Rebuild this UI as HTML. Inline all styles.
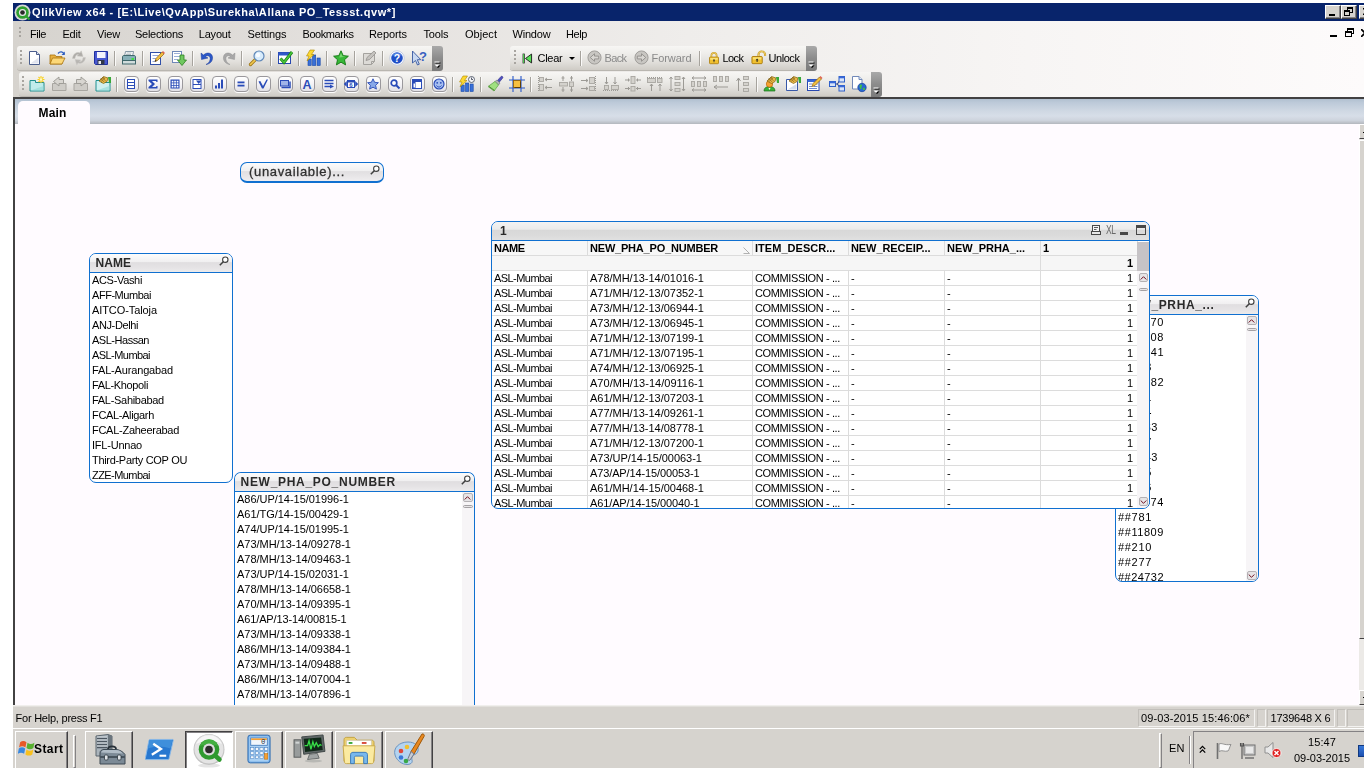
<!DOCTYPE html>
<html lang="en"><head><meta charset="utf-8"><title>QlikView x64 - Allana PO_Tessst.qvw</title>
<style>
*{box-sizing:border-box}
html,body{margin:0;padding:0}
body{width:1364px;height:768px;overflow:hidden;position:relative;background:#fff;
 font-family:"Liberation Sans","DejaVu Sans",sans-serif;font-size:11px;color:#000;line-height:1}
.a{position:absolute}
.t,.r,.c,.g,#title .cap,.hd span,#tab span,.tbx .cap span{filter:grayscale(1)}
.t{position:absolute;white-space:nowrap;letter-spacing:-0.4px;font-size:11px;line-height:13px}
#title{left:13px;top:3px;width:1351px;height:18px;background:#08246b}
#title .cap{left:19px;top:2px;color:#fff;font-weight:bold;font-size:11px;letter-spacing:-0.15px;line-height:14px;white-space:nowrap}
#bars{left:13px;top:21px;width:1351px;height:76px;background:linear-gradient(90deg,#d6d3ce 0,#e4e1de 25%,#efedeb 50%,#f7f5f4 75%,#fdfbfb 100%)}
.band{position:absolute;border-radius:3px 0 0 3px;background:linear-gradient(180deg,#f7f6f4 0,#efeeeb 30%,#e2e0dc 65%,#cfccc6 100%);box-shadow:0 1px 0 #b9b6b0}
.grip{position:absolute;width:2px;height:15px;background:repeating-linear-gradient(180deg,#a8a5a0 0 2px,transparent 2px 4px)}
.grip:after{content:"";position:absolute;left:1px;top:1px;width:2px;height:100%;background:repeating-linear-gradient(180deg,#fff 0 2px,transparent 2px 4px);z-index:-1}
.sep{position:absolute;width:2px;height:15px;border-left:1px solid #a6a39d;border-right:1px solid #fbfaf9}
.ovf{position:absolute;width:11px;background:linear-gradient(180deg,#a9a9a9 0,#8b8b8b 50%,#7b7b7b 100%);border-radius:0 3px 3px 0}
.ic{position:absolute;width:16px;height:16px;overflow:visible}
.rb{position:absolute;width:15px;height:16px;border:1px solid #9a989c;border-radius:4px;background:linear-gradient(180deg,#fff 0,#f4f3f6 50%,#e2e1e6 100%);box-shadow:0 1px 0 #fff}
#tabrow{left:13px;top:97px;width:1351px;height:27px;border-top:2px solid #424142;border-left:2px solid #424142;
 background:linear-gradient(180deg,#b1c0d0 0,#bdcad9 15%,#cfd8e3 48%,#d7dee8 68%,#cdd3dc 86%,#b3b7bd 100%)}
#tab{left:18px;top:101px;width:72px;height:24px;background:#fffbff;border-radius:5px 5px 0 0}
#tab span{left:20.500px;top:5px;font-weight:bold;font-size:12px;line-height:14px;letter-spacing:0.15px}
#sheet{left:13px;top:124px;width:1346px;height:581px;background:#fffbff;border-left:2px solid #424142;overflow:hidden}
#status{left:13px;top:705px;width:1351px;height:24px;background:#d6d3ce;border-top:1px solid #f1efed;box-shadow:inset 0 1px 0 #e2e0dc}
.pane{position:absolute;top:3px;height:18px;border:1px solid;border-color:#c2bfba #f3f2f0 #f3f2f0 #c2bfba}
#task{left:13px;top:728px;width:1351px;height:40px;background:#d6d3ce;border-top:1px solid #fff}
.tb{position:absolute;top:2px;width:48px;height:40px;border:1px solid;border-color:#fff #424142 #424142 #fff;box-shadow:inset -1px -1px 0 #848284,inset 1px 1px 0 #d6d3ce}
.tb.dn{border-color:#424142 #fff #fff #424142;box-shadow:inset 1px 1px 0 #848284;background:#fff}

.lb{position:absolute;border:1px solid #1070d0;border-radius:7px 7px 7px 7px;background:#fff;overflow:hidden}
.lb .hd{position:absolute;left:0;top:0;right:0;height:19px;border-bottom:1px solid #1070d0;
 background:linear-gradient(180deg,#fcfcfc 0,#f1f0f1 42%,#e0dee0 48%,#e5e3e5 75%,#ecebec 100%)}
.lb .hd span{position:absolute;left:5.500px;top:2px;font-size:12px;line-height:14px;white-space:nowrap;color:#2a2a2a;font-weight:bold}
.lb .r{position:absolute;left:2px;height:15px;line-height:15px;font-size:11px;white-space:nowrap;letter-spacing:-0.12px}
.mag{position:absolute;width:10px;height:10px}
.sb{position:absolute;width:12px;background:#f7f5f7}
.sbtn{position:absolute;left:1.500px;width:9px;height:9px;border:1px solid #b4b1b4;border-radius:2px;background:#e6e4e6}
.sth{position:absolute;left:1.500px;width:9px;height:3px;border:1px solid #a5a2a5;border-radius:2px;background:#e7e5e7}
.lb .sbtn,.lb .sth{left:.5px;width:10px}
.tbx{position:absolute;border:1px solid #1070d0;border-radius:7px;background:#fff;overflow:hidden}
.tbx .cap{position:absolute;left:0;top:0;right:0;height:19px;background:linear-gradient(180deg,#f3f3f3 0,#ebebeb 40%,#d8d8d8 46%,#dbdbdb 75%,#e1e1e1 100%);border-bottom:1px solid #1070d0}
.tbx .c{position:absolute;height:15px;line-height:15px;font-size:11px;white-space:nowrap;overflow:hidden;letter-spacing:-0.12px;border-right:1px solid #dedbde;border-bottom:1px solid #dedbde;padding-left:2px}
.tbx .h{font-weight:bold;background:#f7f7f7}
.tbx .tt{background:#f7f5f7}

.tray{position:absolute;left:1180px;top:2px;width:180px;height:40px;border-left:1px solid #848284;border-top:1px solid #848284}
</style></head>
<body>
<div id="title" class="a">
<svg class="a" style="left:1px;top:1px" width="17" height="17" viewBox="0 0 17 17"><circle cx="8.500" cy="8.500" r="8" fill="#d8d8d8"></circle><circle cx="8.500" cy="8.500" r="6.300" fill="#30a030"></circle><path d="M11 11l4.500 4.500" stroke="#30a030" stroke-width="2.400"></path><circle cx="8.500" cy="8.500" r="3.600" fill="#e8e8e8"></circle><circle cx="8.500" cy="8.500" r="2.300" fill="#282828"></circle></svg>
<div class="a cap" style="letter-spacing: 0.57px;">QlikView x64 - [E:\Live\QvApp\Surekha\Allana PO_Tessst.qvw*]</div>
<div class="a" style="left:1312px;top:2px;width:16px;height:14px;background:#d6d3ce;border:1px solid;border-color:#fff #424142 #424142 #fff;box-shadow:inset -1px -1px 0 #848284"><i class="a" style="left:3px;top:8px;width:6px;height:2px;background:#000"></i></div>
<div class="a" style="left:1328px;top:2px;width:16px;height:14px;background:#d6d3ce;border:1px solid;border-color:#fff #424142 #424142 #fff;box-shadow:inset -1px -1px 0 #848284"><i class="a" style="left:5px;top:1px;width:6px;height:6px;border:1px solid #000;border-top-width:2px"></i><i class="a" style="left:2px;top:4px;width:6px;height:6px;border:1px solid #000;border-top-width:2px;background:#d6d3ce"></i></div>
<div class="a" style="left:1346px;top:2px;width:16px;height:14px;background:#d6d3ce;border:1px solid;border-color:#fff #424142 #424142 #fff;box-shadow:inset -1px -1px 0 #848284"><svg class="a" style="left:3px;top:2px" width="8" height="7"><path d="M0 0l8 7M8 0L0 7" stroke="#000" stroke-width="1.600"></path></svg></div>
</div>
<div id="bars" class="a"></div>
<div class="grip" style="left:19px;top:27px;height:11px"></div>
<div class="t mn" style="left: 30px; top: 28px; letter-spacing: -0.43px;">File</div>
<div class="t mn" style="left: 62.5px; top: 28px; letter-spacing: -0.24px;">Edit</div>
<div class="t mn" style="left: 97px; top: 28px; letter-spacing: -0.16px;">View</div>
<div class="t mn" style="left: 135px; top: 28px; letter-spacing: -0.28px;">Selections</div>
<div class="t mn" style="left: 198.7px; top: 28px; letter-spacing: -0.17px;">Layout</div>
<div class="t mn" style="left: 247.5px; top: 28px; letter-spacing: -0.09px;">Settings</div>
<div class="t mn" style="left: 302.5px; top: 28px; letter-spacing: -0.45px;">Bookmarks</div>
<div class="t mn" style="left: 369px; top: 28px; letter-spacing: -0.08px;">Reports</div>
<div class="t mn" style="left: 423.5px; top: 28px; letter-spacing: -0.14px;">Tools</div>
<div class="t mn" style="left: 465px; top: 28px; letter-spacing: 0.03px;">Object</div>
<div class="t mn" style="left: 512.5px; top: 28px; letter-spacing: -0.19px;">Window</div>
<div class="t mn" style="left: 566px; top: 28px; letter-spacing: -0.41px;">Help</div>
<i class="a" style="left:1330px;top:35px;width:7px;height:2px;background:#000"></i>
<i class="a" style="left:1347px;top:28px;width:7px;height:6px;border:1px solid #000;border-top-width:2px"></i><i class="a" style="left:1345px;top:31px;width:7px;height:6px;border:1px solid #000;border-top-width:2px;background:#fbf9f9"></i>
<svg class="a" style="left:1361px;top:29px" width="8" height="8"><path d="M0 0l8 8M8 0L0 8" stroke="#000" stroke-width="1.700"></path></svg>
<div class="band" style="left:17px;top:46px;width:415px;height:24px"></div>
<div class="grip" style="left:20px;top:50px"></div>
<div class="ovf" style="left:432px;top:46px;height:25px"><svg class="a" style="left:2px;top:15px" width="8" height="8" viewBox="0 0 8 8"><path d="M1.500 1.500h5v1h-5zM1.500 4.500h5l-2.500 2.500z" fill="#000"></path><path d="M.5 .5h5v1h-5zM.5 3.500h5l-2.500 2.500z" fill="#fff"></path></svg></div>
<svg class="ic" style="left:27px;top:50px" width="16" height="16" viewBox="0 0 16 16" preserveAspectRatio="none"><path d="M2.5 1.5h7l3 3v10h-10z" fill="#fff" stroke="#4a5d8c"></path><path d="M9.5 1.5v3h3" fill="#d8e0f0" stroke="#4a5d8c"></path><path d="M3.5 13.5h8v-6z" fill="#d4d8e8" opacity=".7"></path></svg>
<svg class="ic" style="left:49px;top:50px" width="16" height="16" viewBox="0 0 16 16" preserveAspectRatio="none"><path d="M1 5h5l1 1.5h6V14H1z" fill="#e8b040" stroke="#a87410" stroke-width=".8"></path><path d="M1 14l2.5-6H16l-3 6z" fill="#fcd878" stroke="#a87410" stroke-width=".8"></path><path d="M9 3.5c2-2.5 5-2 6 .5" fill="none" stroke="#2a5cc0" stroke-width="1.3"></path><path d="M15.8 1.5v3.5h-3.3z" fill="#2a5cc0"></path></svg>
<svg class="ic" style="left:71px;top:50px" width="16" height="16" viewBox="0 0 16 16" preserveAspectRatio="none"><path d="M1.500 8.500C2 4 5.500 1.500 9 3l1.200-2.200L12 6.500 6 6l1.500-1.500C5.500 4 4 6 4 8.500z" fill="#aeaca8" stroke="#c8c6c2" stroke-width=".5"></path><path d="M14.500 7.500c-.5 4.500-4 7-7.500 5.500l-1.200 2.200L4 9.500l6 .5-1.500 1.500c2 .5 3.500-1.500 3.500-4z" fill="#b8b6b2" stroke="#cecccb" stroke-width=".5"></path></svg>
<svg class="ic" style="left:93px;top:50px" width="16" height="16" viewBox="0 0 16 16" preserveAspectRatio="none"><path d="M1.500 1.500h13v13h-12l-1-1z" fill="#4858d0" stroke="#2030a0"></path><rect x="4" y="2" width="8.500" height="6" fill="#f4f4fc"></rect><rect x="4.500" y="10" width="7" height="4.500" fill="#303848"></rect><rect x="5.500" y="11" width="2.500" height="3" fill="#e8e8f0"></rect></svg>
<div class="sep" style="left:114px;top:51px"></div>
<svg class="ic" style="left:121px;top:50px" width="16" height="16" viewBox="0 0 16 16" preserveAspectRatio="none"><path d="M4.500 1.500h8l-1 5h-8z" fill="#fff" stroke="#6a8090" stroke-width=".8"></path><path d="M1.500 7c0-1 .5-1.500 1.500-1.500h10c1 0 1.500.5 1.500 1.500v5h-13z" fill="#88b0b8" stroke="#40686c"></path><rect x="1.500" y="10.500" width="13" height="3.500" fill="#d0dcdc" stroke="#40686c"></rect><rect x="10.500" y="8" width="2.500" height="2" fill="#40e040"></rect><path d="M5.500 3h5M5 4.500h5" stroke="#90a0a8" stroke-width=".7"></path></svg>
<div class="sep" style="left:142px;top:51px"></div>
<svg class="ic" style="left:149px;top:50px" width="16" height="16" viewBox="0 0 16 16" preserveAspectRatio="none"><rect x="1.500" y="2.500" width="10" height="12" fill="#fff" stroke="#3050a8"></rect><path d="M3.500 5.500h6M3.500 8.500h4M3.500 11.500h3" stroke="#90a4d8" stroke-width="1"></path><path d="M6 11.500l1-3L13 2l2 2-6.500 6.500z" fill="#f0c040" stroke="#906010" stroke-width=".7"></path><path d="M13 2l1-1 2 2-1 1z" fill="#e06050"></path><path d="M6 11.500l.5-1.700 1.200 1.200z" fill="#202020"></path></svg>
<svg class="ic" style="left:171px;top:50px" width="16" height="16" viewBox="0 0 16 16" preserveAspectRatio="none"><rect x="1.500" y="1.500" width="9" height="11" fill="#fff" stroke="#7088b8"></rect><path d="M3 3.500h6M3 6.500h6M3 9.500h4" stroke="#9cb0d8" stroke-width="1"></path><path d="M9 5h4v5h2.500l-4.500 5.500L6.500 10H9z" fill="#70c860" stroke="#2c8020" stroke-width=".8"></path></svg>
<div class="sep" style="left:192px;top:51px"></div>
<svg class="ic" style="left:199px;top:50px" width="16" height="16" viewBox="0 0 16 16" preserveAspectRatio="none"><path d="M2 3l.5 6.500L9 8 6.300 6.500C9 4.500 12 6.500 11 10c-.5 2-2 3.500-4 4.500 4.500-.5 7-4 6.500-7.500C13 3 8.500 1.500 4.500 5z" fill="#2c58c8" stroke="#1c3c98" stroke-width=".5"></path></svg>
<svg class="ic" style="left:221px;top:50px" width="16" height="16" viewBox="0 0 16 16" preserveAspectRatio="none"><path d="M14 3l-.5 6.500L7 8l2.700-1.500C7 4.500 4 6.500 5 10c.5 2 2 3.500 4 4.500-4.500-.5-7-4-6.500-7.500C3 3 7.500 1.500 11.500 5z" fill="#a8a8a8" stroke="#909090" stroke-width=".5"></path></svg>
<div class="sep" style="left:241px;top:51px"></div>
<svg class="ic" style="left:249px;top:50px" width="16" height="16" viewBox="0 0 16 16" preserveAspectRatio="none"><path d="M1.500 14.500l5.500-5.500" stroke="#a07818" stroke-width="3.200" stroke-linecap="round"></path><path d="M1.500 14.500l5.500-5.500" stroke="#f0c850" stroke-width="1.600" stroke-linecap="round"></path><circle cx="10" cy="6" r="5" fill="#d8ecfc" stroke="#6088b8" stroke-width="1.200"></circle><circle cx="9" cy="5" r="2.200" fill="#fff" opacity=".8"></circle></svg>
<div class="sep" style="left:270px;top:51px"></div>
<svg class="ic" style="left:277px;top:50px" width="16" height="16" viewBox="0 0 16 16" preserveAspectRatio="none"><rect x="1.500" y="2.500" width="12" height="11" fill="#fff" stroke="#2848b0"></rect><rect x="1.500" y="2.500" width="12" height="3" fill="#3058c8"></rect><path d="M3.500 8.500l3.500 4L15 2" fill="none" stroke="#187818" stroke-width="3"></path><path d="M3.500 8.500l3.500 4L15 2" fill="none" stroke="#48c838" stroke-width="1.700"></path></svg>
<div class="sep" style="left:298px;top:51px"></div>
<svg class="ic" style="left:305px;top:50px" width="16" height="16" viewBox="0 0 16 16" preserveAspectRatio="none"><rect x="3" y="9" width="3.200" height="6.500" fill="#3870d8" stroke="#1848a8" stroke-width=".6"></rect><rect x="7.500" y="5" width="3.200" height="10.500" fill="#3870d8" stroke="#1848a8" stroke-width=".6"></rect><rect x="12" y="8" width="3.200" height="7.500" fill="#3870d8" stroke="#1848a8" stroke-width=".6"></rect><path d="M5 0h4.500L6.500 4.500H9L2 11l2-5H1.500z" fill="#fcd830" stroke="#b08800" stroke-width=".6"></path></svg>
<div class="sep" style="left:326px;top:51px"></div>
<svg class="ic" style="left:333px;top:50px" width="16" height="16" viewBox="0 0 16 16" preserveAspectRatio="none"><path d="M8 .8l2.200 4.800 5.200.6-3.900 3.500 1.100 5.200L8 12.200l-4.600 2.700 1.100-5.200L.6 6.200l5.200-.6z" fill="#38b838" stroke="#147814" stroke-width=".9"></path><path d="M8 3l1.400 3.300 3.300.4-6.500.800z" fill="#88e080" opacity=".8"></path></svg>
<div class="sep" style="left:354px;top:51px"></div>
<svg class="ic" style="left:361px;top:50px" width="16" height="16" viewBox="0 0 16 16" preserveAspectRatio="none"><path d="M2.500 3.500h11v8l-3 3h-8z" fill="#dcdad6" stroke="#a4a29e"></path><path d="M10.500 14.500v-3h3" fill="none" stroke="#a4a29e"></path><path d="M5 10.500l1-3L13 1l2 2-6.500 6.500z" fill="#c4c2be" stroke="#8c8a86" stroke-width=".7"></path></svg>
<div class="sep" style="left:382px;top:51px"></div>
<svg class="ic" style="left:389px;top:50px" width="16" height="16" viewBox="0 0 16 16" preserveAspectRatio="none"><circle cx="8" cy="8" r="7.200" fill="#fff" stroke="#b8c4e0" stroke-width=".8"></circle><circle cx="8" cy="8" r="5.800" fill="#2050c8"></circle><path d="M3 6a5.500 5.500 0 0 1 10 0c-3-1.500-7-1.500-10 0z" fill="#6090e8" opacity=".8"></path><text x="8" y="12" font-family="Liberation Sans,sans-serif" font-size="10.500" font-weight="bold" fill="#fff" text-anchor="middle">?</text></svg>
<svg class="ic" style="left:411px;top:50px" width="16" height="16" viewBox="0 0 16 16" preserveAspectRatio="none"><path d="M1.500 1v12l3-2.500 2 4.500 1.800-.8-2-4.500h3.500z" fill="#c8d8f0" stroke="#3858a0" stroke-width=".9"></path><text x="12" y="11" font-family="Liberation Sans,sans-serif" font-size="13" font-weight="bold" fill="#3860c0" text-anchor="middle">?</text></svg>
<div class="band" style="left:510px;top:46px;width:296px;height:24px"></div>
<div class="grip" style="left:514px;top:50px"></div>
<div class="ovf" style="left:806px;top:46px;height:25px"><svg class="a" style="left:2px;top:15px" width="8" height="8" viewBox="0 0 8 8"><path d="M1.500 1.500h5v1h-5zM1.500 4.500h5l-2.500 2.500z" fill="#000"></path><path d="M.5 .5h5v1h-5zM.5 3.500h5l-2.500 2.500z" fill="#fff"></path></svg></div>
<svg class="ic" style="left:521px;top:51.5px;width:13px;height:13px" width="13" height="13" viewBox="0 0 16 16" preserveAspectRatio="none"><rect x="2" y="2" width="2.600" height="12" fill="#181818"></rect><path d="M13 2.500v11L5.500 8z" fill="#58e058" stroke="#181818" stroke-width="1.100"></path><rect x="2.600" y="2.600" width="1.200" height="10.800" fill="#58e058"></rect></svg>
<div class="t" style="left: 537.5px; top: 52px; letter-spacing: -0.26px;">Clear</div>
<i class="a" style="left:569px;top:57px;border:3px solid transparent;border-top:3px solid #000;border-bottom:0"></i>
<div class="sep" style="left:580px;top:51px"></div>
<svg class="ic" style="left:587px;top:50px;width:15px;height:15px" width="15" height="15" viewBox="0 0 16 16" preserveAspectRatio="none"><circle cx="8" cy="8" r="7" fill="#c8c6c2" stroke="#9c9a96"></circle><path d="M3.500 8l4.500-4v2.500h4.500v3H8V12z" fill="#d8d6d2" stroke="#8c8a86" stroke-width=".9"></path></svg>
<div class="t" style="left: 604.5px; top: 52px; color: rgb(140, 138, 134); letter-spacing: -0.62px;">Back</div>
<svg class="ic" style="left:634px;top:50px;width:15px;height:15px" width="15" height="15" viewBox="0 0 16 16" preserveAspectRatio="none"><circle cx="8" cy="8" r="7" fill="#c8c6c2" stroke="#9c9a96"></circle><path d="M12.500 8L8 4v2.500H3.500v3H8V12z" fill="#d8d6d2" stroke="#8c8a86" stroke-width=".9"></path></svg>
<div class="t" style="left: 651.5px; top: 52px; color: rgb(140, 138, 134); letter-spacing: -0.05px;">Forward</div>
<div class="sep" style="left:699px;top:51px"></div>
<svg class="ic" style="left:707.5px;top:51.5px;width:12px;height:12.5px" width="12" height="12.5" viewBox="0 0 16 16" preserveAspectRatio="none"><path d="M4.500 7V4.500a3.500 3.500 0 0 1 7 0V7" fill="none" stroke="#c89820" stroke-width="2.200"></path><path d="M4.500 7V4.500a3.500 3.500 0 0 1 7 0V7" fill="none" stroke="#f8e080" stroke-width=".9"></path><rect x="2" y="6.500" width="12" height="8.500" rx="1" fill="#f0c030" stroke="#a87808"></rect><rect x="3" y="7.500" width="10" height="2.500" fill="#fce888" opacity=".8"></rect><path d="M8 9l1.500 2h-1v2h-1v-2h-1z" fill="#202020"></path></svg>
<div class="t" style="left: 722.5px; top: 52px; letter-spacing: -0.56px;">Lock</div>
<svg class="ic" style="left:751px;top:50.5px;width:15px;height:13.5px" width="15" height="13.5" viewBox="0 0 16 16" preserveAspectRatio="none"><path d="M8 7V4a3.500 3.500 0 0 1 7 0v2" fill="none" stroke="#c89820" stroke-width="2.200"></path><path d="M8 7V4a3.500 3.500 0 0 1 7 0v2" fill="none" stroke="#f8e080" stroke-width=".9"></path><rect x="1" y="6.500" width="11" height="8.500" rx="1" fill="#f0c030" stroke="#a87808"></rect><rect x="2" y="7.500" width="9" height="2.500" fill="#fce888" opacity=".8"></rect><path d="M6.500 9L8 11H7v2H6v-2H5z" fill="#202020"></path></svg>
<div class="t" style="left: 768.5px; top: 52px; letter-spacing: -0.44px;">Unlock</div>
<div class="band" style="left:19px;top:72px;width:852px;height:24px"></div>
<div class="grip" style="left:22px;top:76px"></div>
<div class="ovf" style="left:871px;top:72px;height:25px"><svg class="a" style="left:2px;top:15px" width="8" height="8" viewBox="0 0 8 8"><path d="M1.500 1.500h5v1h-5zM1.500 4.500h5l-2.500 2.500z" fill="#000"></path><path d="M.5 .5h5v1h-5zM.5 3.500h5l-2.500 2.500z" fill="#fff"></path></svg></div>
<svg class="ic" style="left:29px;top:76px" width="16" height="16" viewBox="0 0 16 16" preserveAspectRatio="none"><path d="M1 4.500h5.500v2H15V15H1z" fill="#c0ecec" stroke="#209090"></path><path d="M1.500 14.500h13V10z" fill="#98dcd8" opacity=".7"></path><path d="M12 0v7M8.500 3.500h7M9.500 1l5 5M14.500 1l-5 5" stroke="#f8d020" stroke-width="1.100"></path><rect x="10.800" y="2.300" width="2.400" height="2.400" fill="#fff8c0"></rect></svg>
<svg class="ic" style="left:51px;top:76px" width="16" height="16" viewBox="0 0 16 16" preserveAspectRatio="none"><path d="M1.500 7.500H15v7H1.500z" fill="#ceccc7" stroke="#a8a6a1"></path><path d="M2.500 5.500l5.500-4.500v2.500h4.500v4h-4.500V10z" fill="#d8d6d1" stroke="#9a9893" stroke-width=".9"></path></svg>
<svg class="ic" style="left:73px;top:76px" width="16" height="16" viewBox="0 0 16 16" preserveAspectRatio="none"><path d="M1 7.500h13.500v7H1z" fill="#ceccc7" stroke="#a8a6a1"></path><path d="M13.500 5.500L8 1v2.500H3.500v4H8V10z" fill="#d8d6d1" stroke="#9a9893" stroke-width=".9"></path></svg>
<svg class="ic" style="left:95px;top:76px" width="16" height="16" viewBox="0 0 16 16" preserveAspectRatio="none"><path d="M1 4.500h5.500v2H15V15H1z" fill="#d0f0f0" stroke="#209090"></path><path d="M1.500 14.500h13V10z" fill="#98dcd8" opacity=".7"></path><path d="M4 5l4.500-4.500L13 2l-1 3.500-3.500 2z" fill="#e8b848" stroke="#806010" stroke-width=".7"></path><path d="M5 4.500l4-3.500M6 5.500l4-3.500M5.500 2l3.500 4M7.500 1l3 4" stroke="#705010" stroke-width=".5"></path><path d="M13 1h3v6h-2z" fill="#38a838"></path></svg>
<div class="sep" style="left:116px;top:77px"></div>
<div class="rb" style="left:123.5px;top:76px"></div><svg class="ic" style="left:123px;top:76px" width="16" height="16" viewBox="0 0 16 16" preserveAspectRatio="none"><rect x="4.500" y="3.500" width="7" height="9" fill="#fff" stroke="#2a4cb8"></rect><path d="M5 6.500h6M5 9.500h6" stroke="#2a4cb8" stroke-width="1.200"></path></svg>
<div class="rb" style="left:145.5px;top:76px"></div><svg class="ic" style="left:145px;top:76px" width="16" height="16" viewBox="0 0 16 16" preserveAspectRatio="none"><path d="M3.500 3.500h9v2.500h-1l-.5-1h-4l3 3-3 3h4l.5-1h1v2.500h-9v-1.500l3.500-3-3.500-3z" fill="#2a4cb8"></path></svg>
<div class="rb" style="left:167.5px;top:76px"></div><svg class="ic" style="left:167px;top:76px" width="16" height="16" viewBox="0 0 16 16" preserveAspectRatio="none"><rect x="3.500" y="3.500" width="9" height="9" fill="#2a4cb8"></rect><path d="M4.700 4.700h1.700v1.700H4.700zM7.200 4.700h1.700v1.700H7.200zM9.700 4.700h1.700v1.700H9.700zM4.700 7.200h1.700v1.700H4.700zM7.200 7.200h1.700v1.700H7.200zM9.700 7.200h1.700v1.700H9.700zM4.700 9.700h1.700v1.700H4.700zM7.200 9.700h1.700v1.700H7.200zM9.700 9.700h1.700v1.700H9.700z" fill="#fff"></path></svg>
<div class="rb" style="left:189.5px;top:76px"></div><svg class="ic" style="left:189px;top:76px" width="16" height="16" viewBox="0 0 16 16" preserveAspectRatio="none"><rect x="4" y="3.500" width="8" height="9" fill="#fff" stroke="#2a4cb8"></rect><path d="M4 8.500h8" stroke="#2a4cb8"></path><path d="M7 4.500h5.500L9.700 8z" fill="#2a4cb8"></path></svg>
<div class="rb" style="left:211.5px;top:76px"></div><svg class="ic" style="left:211px;top:76px" width="16" height="16" viewBox="0 0 16 16" preserveAspectRatio="none"><rect x="4" y="9.500" width="2" height="3" fill="#2a4cb8"></rect><rect x="7" y="7" width="2" height="5.500" fill="#2a4cb8"></rect><rect x="10" y="3.500" width="2" height="9" fill="#2a4cb8"></rect></svg>
<div class="rb" style="left:233.5px;top:76px"></div><svg class="ic" style="left:233px;top:76px" width="16" height="16" viewBox="0 0 16 16" preserveAspectRatio="none"><rect x="4.500" y="5.500" width="7" height="1.800" fill="#2a4cb8"></rect><rect x="4.500" y="8.700" width="7" height="1.800" fill="#2a4cb8"></rect></svg>
<div class="rb" style="left:255.5px;top:76px"></div><svg class="ic" style="left:255px;top:76px" width="16" height="16" viewBox="0 0 16 16" preserveAspectRatio="none"><path d="M3.500 5.500l1.800-.500 2.700 5 3.500-6.500h1.500L8.500 12.500h-1.500z" fill="#2a4cb8"></path></svg>
<div class="rb" style="left:277.5px;top:76px"></div><svg class="ic" style="left:277px;top:76px" width="16" height="16" viewBox="0 0 16 16" preserveAspectRatio="none"><rect x="3.500" y="4.500" width="8" height="5.500" fill="#a0b4e8" stroke="#2a4cb8"></rect><path d="M4.500 11.500h8.500v-6" stroke="#2a4cb8" stroke-width="1.500" fill="none"></path></svg>
<div class="rb" style="left:299.5px;top:76px"></div><svg class="ic" style="left:299px;top:76px" width="16" height="16" viewBox="0 0 16 16" preserveAspectRatio="none"><text x="8" y="13" font-family="Liberation Sans,sans-serif" font-size="12.500" font-weight="bold" fill="#2a4cb8" text-anchor="middle">A</text></svg>
<div class="rb" style="left:321.5px;top:76px"></div><svg class="ic" style="left:321px;top:76px" width="16" height="16" viewBox="0 0 16 16" preserveAspectRatio="none"><path d="M3.500 4.500h9M3.500 7.500h9M3.500 10.500h6" stroke="#2a4cb8" stroke-width="1.500"></path><path d="M9 8.500l4 2-4 2z" fill="#2a4cb8"></path></svg>
<div class="rb" style="left:343.5px;top:76px"></div><svg class="ic" style="left:343px;top:76px" width="16" height="16" viewBox="0 0 16 16" preserveAspectRatio="none"><path d="M.8 8l3-3v6zM15.200 8l-3-3v6z" fill="#2a4cb8"></path><rect x="4.500" y="4.500" width="7" height="7" fill="#fff" stroke="#2a4cb8"></rect><rect x="4.500" y="4.500" width="7" height="2" fill="#2a4cb8"></rect><text x="8" y="11.300" font-family="Liberation Sans,sans-serif" font-size="6" font-weight="bold" fill="#2a4cb8" text-anchor="middle">6</text></svg>
<div class="rb" style="left:365.5px;top:76px"></div><svg class="ic" style="left:365px;top:76px" width="16" height="16" viewBox="0 0 16 16" preserveAspectRatio="none"><path d="M8 2.800l1.600 3.500 3.800.4-2.800 2.600.8 3.800L8 11.200l-3.400 1.900.8-3.800L2.600 6.700l3.800-.4z" fill="#88a8e8" stroke="#2a4cb8" stroke-width=".9"></path></svg>
<div class="rb" style="left:387.5px;top:76px"></div><svg class="ic" style="left:387px;top:76px" width="16" height="16" viewBox="0 0 16 16" preserveAspectRatio="none"><circle cx="7" cy="7" r="2.800" fill="#fff" stroke="#2a4cb8" stroke-width="1.700"></circle><path d="M9 9l3.500 3.500" stroke="#2a4cb8" stroke-width="2"></path></svg>
<div class="rb" style="left:409.5px;top:76px"></div><svg class="ic" style="left:409px;top:76px" width="16" height="16" viewBox="0 0 16 16" preserveAspectRatio="none"><rect x="3.500" y="3.500" width="9" height="9" fill="#fff" stroke="#2a4cb8"></rect><rect x="3.500" y="3.500" width="9" height="2.500" fill="#2a4cb8"></rect><rect x="3.500" y="6" width="3" height="6.500" fill="#2a4cb8"></rect><rect x="4.500" y="7.500" width="1.500" height="4" fill="#fff"></rect></svg>
<div class="rb" style="left:431.5px;top:76px"></div><svg class="ic" style="left:431px;top:76px" width="16" height="16" viewBox="0 0 16 16" preserveAspectRatio="none"><circle cx="8" cy="8" r="5" fill="#a8c0f0" stroke="#2a4cb8" stroke-width="1.200"></circle><circle cx="6.200" cy="6.800" r=".9" fill="#2a4cb8"></circle><circle cx="9.800" cy="6.800" r=".9" fill="#2a4cb8"></circle><path d="M5.500 9.500c1.500 2 3.500 2 5 0" stroke="#2a4cb8" stroke-width="1" fill="none"></path></svg>
<div class="sep" style="left:452px;top:77px"></div>
<svg class="ic" style="left:459px;top:76px" width="16" height="16" viewBox="0 0 16 16" preserveAspectRatio="none"><rect x="2" y="9" width="3.200" height="6.500" fill="#3870d8" stroke="#1848a8" stroke-width=".6"></rect><rect x="6.500" y="7" width="3.200" height="8.500" fill="#3870d8" stroke="#1848a8" stroke-width=".6"></rect><rect x="11" y="8" width="3.200" height="7.500" fill="#3870d8" stroke="#1848a8" stroke-width=".6"></rect><path d="M4 0h4.500L5.500 4.500H8L1 11l2-5H.5z" fill="#fcd830" stroke="#b08800" stroke-width=".6"></path><circle cx="12.500" cy="3.500" r="3" fill="#f4f4f8" stroke="#505868" stroke-width=".9"></circle><path d="M12.500 1.500v2h1.500" stroke="#303848" stroke-width=".8" fill="none"></path></svg>
<div class="sep" style="left:480px;top:77px"></div>
<svg class="ic" style="left:487px;top:76px" width="16" height="16" viewBox="0 0 16 16" preserveAspectRatio="none"><path d="M10 5l4-4.500c1-.8 2.500.5 1.700 1.600L12 6.500z" fill="#5050c0" stroke="#303088" stroke-width=".6"></path><path d="M8 5.500l2-1.500 3 3-1.500 2z" fill="#b0b0b8" stroke="#707078" stroke-width=".6"></path><path d="M8 5.500l3.500 3.500L7 15l-6-4.500z" fill="#a0e080" stroke="#58a040" stroke-width=".7"></path><path d="M2 10.500l5.500 4" stroke="#488830" stroke-width="1"></path></svg>
<svg class="ic" style="left:509px;top:76px" width="16" height="16" viewBox="0 0 16 16" preserveAspectRatio="none"><path d="M4 0v16M12 0v16M0 4h16M0 12h16" stroke="#2858c8" stroke-width="1.100"></path><rect x="4.500" y="4.500" width="7" height="7" fill="#f8c040" stroke="#906010" stroke-width=".9"></rect><path d="M5.500 11.500h6v-6" stroke="#604008" stroke-width="1" fill="none"></path></svg>
<div class="sep" style="left:530px;top:77px"></div>
<svg class="ic" style="left:537px;top:76px" width="16" height="16" viewBox="0 0 16 16" preserveAspectRatio="none"><path d="M1.500 0v16" stroke="#9c9a95" stroke-dasharray="1 1"></path><rect x="2.500" y="1.500" width="4" height="4" fill="#d4d2cd" stroke="#a8a6a1" stroke-width=".9"></rect><rect x="2.500" y="8.500" width="4" height="6" fill="#d4d2cd" stroke="#a8a6a1" stroke-width=".9"></rect><path d="M8 3.500h7M8 3.500l2-1.500M8 3.500l2 1.500M8 11.500h7M8 11.500l2-1.500M8 11.500l2 1.500" stroke="#9c9a95" stroke-width="1" fill="none"></path></svg>
<svg class="ic" style="left:559px;top:76px" width="16" height="16" viewBox="0 0 16 16" preserveAspectRatio="none"><rect x=".5" y="6.500" width="8" height="3.500" fill="#d4d2cd" stroke="#a8a6a1" stroke-width=".9"></rect><rect x="10.500" y="6" width="4" height="4.500" fill="#d4d2cd" stroke="#a8a6a1" stroke-width=".9"></rect><path d="M4 0v5M2.500 2h3M4 16v-5M2.500 14h3M12.500 0v5M11 2h3M12.500 16v-5M11 14h3" stroke="#9c9a95" stroke-width="1" fill="none"></path></svg>
<svg class="ic" style="left:581px;top:76px" width="16" height="16" viewBox="0 0 16 16" preserveAspectRatio="none"><path d="M14.500 0v16" stroke="#9c9a95" stroke-dasharray="1 1"></path><rect x="8.500" y="1.500" width="5" height="6" fill="#d4d2cd" stroke="#a8a6a1" stroke-width=".9"></rect><rect x="8.500" y="10.500" width="5" height="4" fill="#d4d2cd" stroke="#a8a6a1" stroke-width=".9"></rect><path d="M0 4.500h7M7 4.500l-2-1.500M7 4.500l-2 1.500M0 12.500h7M7 12.500l-2-1.500M7 12.500l-2 1.500" stroke="#9c9a95" stroke-width="1" fill="none"></path></svg>
<svg class="ic" style="left:603px;top:76px" width="16" height="16" viewBox="0 0 16 16" preserveAspectRatio="none"><path d="M0 14.500h16" stroke="#9c9a95" stroke-dasharray="1 1"></path><rect x="1.500" y="9.500" width="4" height="4" fill="#d4d2cd" stroke="#a8a6a1" stroke-width=".9"></rect><rect x="8.500" y="9.500" width="7" height="4" fill="#d4d2cd" stroke="#a8a6a1" stroke-width=".9"></rect><path d="M3.500 1v7M3.500 8l-1.500-2M3.500 8l1.500-2M12 1v7M12 8l-1.500-2M12 8l1.500-2" stroke="#9c9a95" stroke-width="1" fill="none"></path></svg>
<svg class="ic" style="left:625px;top:76px" width="16" height="16" viewBox="0 0 16 16" preserveAspectRatio="none"><rect x="6" y=".5" width="4" height="7" fill="#d4d2cd" stroke="#a8a6a1" stroke-width=".9"></rect><rect x="6" y="10.500" width="4" height="4.500" fill="#d4d2cd" stroke="#a8a6a1" stroke-width=".9"></rect><path d="M0 4h5M3.500 2.500v3M16 4h-5M12.500 2.500v3M0 12.500h5M3.500 11v3M16 12.500h-5M12.500 11v3" stroke="#9c9a95" stroke-width="1" fill="none"></path></svg>
<svg class="ic" style="left:647px;top:76px" width="16" height="16" viewBox="0 0 16 16" preserveAspectRatio="none"><path d="M0 1.500h16" stroke="#9c9a95" stroke-dasharray="1 1"></path><rect x=".5" y="2.500" width="8" height="4" fill="#d4d2cd" stroke="#a8a6a1" stroke-width=".9"></rect><rect x="10.500" y="2.500" width="4.500" height="4" fill="#d4d2cd" stroke="#a8a6a1" stroke-width=".9"></rect><path d="M4.500 15V8M4.500 8l-1.500 2M4.500 8l1.500 2M13 15V8M13 8l-1.500 2M13 8l1.500 2" stroke="#9c9a95" stroke-width="1" fill="none"></path></svg>
<svg class="ic" style="left:669px;top:76px" width="16" height="16" viewBox="0 0 16 16" preserveAspectRatio="none"><rect x="6" y=".5" width="5" height="3" fill="#d4d2cd" stroke="#a8a6a1" stroke-width=".9"></rect><rect x="6" y="6.500" width="5" height="3" fill="#d4d2cd" stroke="#a8a6a1" stroke-width=".9"></rect><rect x="6" y="12.500" width="5" height="3" fill="#d4d2cd" stroke="#a8a6a1" stroke-width=".9"></rect><path d="M2 1v14M2 1L.5 3M2 1l1.500 2M2 15L.5 13M2 15l1.500-2M14.500 1v14M14.500 1L13 3M14.500 1L16 3M14.500 15L13 13M14.500 15l1.500-2" stroke="#9c9a95" stroke-width="1" fill="none"></path></svg>
<svg class="ic" style="left:691px;top:76px" width="16" height="16" viewBox="0 0 16 16" preserveAspectRatio="none"><rect x=".5" y="5.500" width="3" height="5" fill="#d4d2cd" stroke="#a8a6a1" stroke-width=".9"></rect><rect x="6.500" y="5.500" width="3" height="5" fill="#d4d2cd" stroke="#a8a6a1" stroke-width=".9"></rect><rect x="12.500" y="5.500" width="3" height="5" fill="#d4d2cd" stroke="#a8a6a1" stroke-width=".9"></rect><path d="M1 2h14M1 2l2-1.500M1 2l2 1.500M15 2l-2-1.500M15 2l-2 1.500M1 14h14M1 14l2-1.500M1 14l2 1.500M15 14l-2-1.500M15 14l-2 1.500" stroke="#9c9a95" stroke-width="1" fill="none"></path></svg>
<svg class="ic" style="left:713px;top:76px" width="16" height="16" viewBox="0 0 16 16" preserveAspectRatio="none"><rect x=".5" y=".5" width="3" height="5" fill="#d4d2cd" stroke="#a8a6a1" stroke-width=".9"></rect><rect x="6.500" y=".5" width="3" height="5" fill="#d4d2cd" stroke="#a8a6a1" stroke-width=".9"></rect><rect x="12.500" y=".5" width="3" height="5" fill="#d4d2cd" stroke="#a8a6a1" stroke-width=".9"></rect><path d="M1 11h14M1 11l3-2M1 11l3 2" stroke="#9c9a95" stroke-width="1" fill="none"></path></svg>
<svg class="ic" style="left:735px;top:76px" width="16" height="16" viewBox="0 0 16 16" preserveAspectRatio="none"><rect x="8.500" y=".5" width="5" height="3" fill="#d4d2cd" stroke="#a8a6a1" stroke-width=".9"></rect><rect x="8.500" y="6.500" width="5" height="3" fill="#d4d2cd" stroke="#a8a6a1" stroke-width=".9"></rect><rect x="8.500" y="12.500" width="5" height="3" fill="#d4d2cd" stroke="#a8a6a1" stroke-width=".9"></rect><path d="M3.500 15V2M3.500 2l-2 3M3.500 2l2 3" stroke="#9c9a95" stroke-width="1" fill="none"></path></svg>
<div class="sep" style="left:756px;top:77px"></div>
<svg class="ic" style="left:763px;top:76px" width="16" height="16" viewBox="0 0 16 16" preserveAspectRatio="none"><path d="M1 15c0-3 2-4.500 5.500-4.500S12 12 12 15z" fill="#38b038" stroke="#187018" stroke-width=".7"></path><circle cx="6.500" cy="8" r="3.200" fill="#f8a030" stroke="#b86808" stroke-width=".7"></circle><path d="M5.500 12l1 2 1-2z" fill="#fff"></path><path d="M4 5l4.500-4.500L13 2l-1 3.500-3.500 2z" fill="#e8b848" stroke="#806010" stroke-width=".7"></path><path d="M5 4.500l4-3.500M6 5.500l4-3.500M5.500 2l3.500 4M7.500 1l3 4" stroke="#705010" stroke-width=".5"></path><path d="M13 1h3v6h-2z" fill="#38a838"></path></svg>
<svg class="ic" style="left:785px;top:76px" width="16" height="16" viewBox="0 0 16 16" preserveAspectRatio="none"><path d="M1.500 3.500h9l2 2v9h-11z" fill="#fff" stroke="#3858a8"></path><path d="M2.500 13.500h9V8z" fill="#c8d4ec" opacity=".8"></path><path d="M4 5l4.500-4.500L13 2l-1 3.500-3.500 2z" fill="#e8b848" stroke="#806010" stroke-width=".7"></path><path d="M5 4.500l4-3.500M6 5.500l4-3.500M5.500 2l3.500 4M7.500 1l3 4" stroke="#705010" stroke-width=".5"></path><path d="M13 1h3v6h-2z" fill="#38a838"></path></svg>
<svg class="ic" style="left:807px;top:76px" width="16" height="16" viewBox="0 0 16 16" preserveAspectRatio="none"><rect x=".5" y="3.500" width="11.500" height="11" fill="#fff" stroke="#2848b0"></rect><rect x=".5" y="3.500" width="11.500" height="2.500" fill="#3868d8"></rect><path d="M2 8h3M6.500 8h4M2 10.500h3M6.500 10.500h4M2 12.500h8" stroke="#6080c8" stroke-width=".9"></path><path d="M5 10.500l1-3L12.500 1l2 2L8 9.500z" fill="#f0c040" stroke="#906010" stroke-width=".7"></path><path d="M12.500 1l1-1 2 2-1 1z" fill="#e06050"></path></svg>
<svg class="ic" style="left:829px;top:76px" width="16" height="16" viewBox="0 0 16 16" preserveAspectRatio="none"><path d="M6 8h2.500M8.500 8L11 3.500M8.500 8L11 12.500" stroke="#283878" stroke-width="1" fill="none"></path><rect x=".5" y="5.500" width="6" height="5" fill="#d8e4f8" stroke="#3060c8"></rect><rect x=".5" y="5.500" width="6" height="1.800" fill="#3868d8"></rect><rect x="10" y=".5" width="5.500" height="5.500" fill="#d8e4f8" stroke="#3060c8"></rect><rect x="10" y=".5" width="5.500" height="1.800" fill="#3868d8"></rect><rect x="10" y="9.500" width="5.500" height="5.500" fill="#d8e4f8" stroke="#3060c8"></rect><rect x="10" y="9.500" width="5.500" height="1.800" fill="#3868d8"></rect></svg>
<svg class="ic" style="left:851px;top:76px" width="16" height="16" viewBox="0 0 16 16" preserveAspectRatio="none"><path d="M1.500 .5h6.500l3 3v9.500h-9.500z" fill="#fff" stroke="#7088b8"></path><path d="M8 .5v3h3" fill="#e0e8f4" stroke="#7088b8"></path><circle cx="11" cy="11.500" r="4.200" fill="#2868d0" stroke="#1840a0" stroke-width=".7"></circle><path d="M8.500 9.500c1-1.500 2.500-1 2.500 0s-1 1.500-.5 2.500-1 1.500-1.500.5zM12 12c1-.5 2 0 2 1s-1.500 1.500-2 .5z" fill="#40c040"></path></svg>
<div id="tabrow" class="a"></div>
<div id="tab" class="a"><span class="a">Main</span></div>
<div id="sheet" class="a"><div class="a" style="left:225px;top:38px;width:144px;height:21px;border:1px solid #1070d0;border-bottom-width:2px;border-radius:7px;overflow:hidden;background:linear-gradient(180deg,#fbfbfb 0,#f1f0f1 42%,#e1dfe1 48%,#e8e6e8 75%,#efedef 100%)"><span class="a g" style="left: 8px; top: 1px; font-size: 13px; line-height: 16px; color: rgb(48, 48, 48); -webkit-text-stroke: 0.3px rgb(48, 48, 48); white-space: nowrap; letter-spacing: 0.67px;">(unavailable)...</span><svg class="mag" style="right:3px;top:2px" viewBox="0 0 10 10"><circle cx="6.300" cy="3.700" r="2.700" fill="#fff" stroke="#404040" stroke-width="1.100"></circle><path d="M4.300 5.700L.8 9.200" stroke="#404040" stroke-width="1.500"></path></svg></div><div class="lb" style="left:1100px;top:171px;width:144px;height:287px"><div class="hd"><span style="letter-spacing: 0.64px;">NEW_PRHA_...</span><svg class="mag" style="right:3px;top:2px" viewBox="0 0 10 10"><circle cx="6.300" cy="3.700" r="2.700" fill="#fff" stroke="#404040" stroke-width="1.100"></circle><path d="M4.300 5.700L.8 9.200" stroke="#404040" stroke-width="1.500"></path></svg></div><div class="r" style="top: 19px; letter-spacing: 0.57px;">##11270</div><div class="r" style="top: 34px; letter-spacing: 0.57px;">##11708</div><div class="r" style="top: 49px; letter-spacing: 0.45px;">##12641</div><div class="r" style="top: 64px; letter-spacing: 0.68px;">##133</div><div class="r" style="top: 79px; letter-spacing: 0.45px;">##13282</div><div class="r" style="top: 94px; letter-spacing: 0.68px;">##141</div><div class="r" style="top: 109px; letter-spacing: 0.68px;">##154</div><div class="r" style="top: 124px; letter-spacing: 0.55px;">##2233</div><div class="r" style="top: 139px; letter-spacing: 0.68px;">##267</div><div class="r" style="top: 154px; letter-spacing: 0.55px;">##4443</div><div class="r" style="top: 169px; letter-spacing: 0.68px;">##515</div><div class="r" style="top: 184px; letter-spacing: 0.68px;">##626</div><div class="r" style="top: 199px; letter-spacing: 0.57px;">##11474</div><div class="r" style="top: 214px; letter-spacing: 0.68px;">##781</div><div class="r" style="top: 229px; letter-spacing: 0.57px;">##11809</div><div class="r" style="top: 244px; letter-spacing: 0.68px;">##210</div><div class="r" style="top: 259px; letter-spacing: 0.68px;">##277</div><div class="r" style="top: 274px; letter-spacing: 0.45px;">##24732</div><div class="sb" style="right:0;top:19px;bottom:0"><div class="sbtn" style="top:1px"><svg class="a" style="left:50%;top:1px;margin-left:-3.500px" width="7" height="6" viewBox="0 0 7 6"><path d="M.7 4.500L3.500 1.700l2.800 2.800" stroke="#701020" stroke-width="1" fill="none"></path></svg></div><div class="sth" style="top:13px"></div><div class="sbtn" style="bottom:1px"><svg class="a" style="left:50%;top:1px;margin-left:-3.500px" width="7" height="6" viewBox="0 0 7 6"><path d="M.7 1.500L3.500 4.300l2.800-2.800" stroke="#701020" stroke-width="1" fill="none"></path></svg></div></div></div><div class="lb" style="left:74px;top:129px;width:144px;height:230px"><div class="hd"><span style="letter-spacing: 0.04px;">NAME</span><svg class="mag" style="right:3px;top:2px" viewBox="0 0 10 10"><circle cx="6.300" cy="3.700" r="2.700" fill="#fff" stroke="#404040" stroke-width="1.100"></circle><path d="M4.300 5.700L.8 9.200" stroke="#404040" stroke-width="1.500"></path></svg></div><div class="r" style="top: 19px; letter-spacing: -0.33px;">ACS-Vashi</div><div class="r" style="top: 34px; letter-spacing: -0.46px;">AFF-Mumbai</div><div class="r" style="top: 49px; letter-spacing: -0.09px;">AITCO-Taloja</div><div class="r" style="top: 64px; letter-spacing: -0.39px;">ANJ-Delhi</div><div class="r" style="top: 79px; letter-spacing: -0.48px;">ASL-Hassan</div><div class="r" style="top: 94px; letter-spacing: -0.56px;">ASL-Mumbai</div><div class="r" style="top: 109px; letter-spacing: -0.16px;">FAL-Aurangabad</div><div class="r" style="top: 124px; letter-spacing: -0.36px;">FAL-Khopoli</div><div class="r" style="top: 139px; letter-spacing: -0.3px;">FAL-Sahibabad</div><div class="r" style="top: 154px; letter-spacing: -0.34px;">FCAL-Aligarh</div><div class="r" style="top: 169px; letter-spacing: -0.27px;">FCAL-Zaheerabad</div><div class="r" style="top: 184px; letter-spacing: -0.22px;">IFL-Unnao</div><div class="r" style="top: 199px; letter-spacing: -0.31px;">Third-Party COP OU</div><div class="r" style="top: 214px; letter-spacing: -0.56px;">ZZE-Mumbai</div></div><div class="lb" style="left:219px;top:348px;width:241px;height:240px;border-radius:7px 7px 0 0;border-bottom:0"><div class="hd"><span style="letter-spacing: 0.71px;">NEW_PHA_PO_NUMBER</span><svg class="mag" style="right:3px;top:2px" viewBox="0 0 10 10"><circle cx="6.300" cy="3.700" r="2.700" fill="#fff" stroke="#404040" stroke-width="1.100"></circle><path d="M4.300 5.700L.8 9.200" stroke="#404040" stroke-width="1.500"></path></svg></div><div class="r" style="top: 19px; letter-spacing: -0.03px;">A86/UP/14-15/01996-1</div><div class="r" style="top: 34px; letter-spacing: -0.03px;">A61/TG/14-15/00429-1</div><div class="r" style="top: 49px; letter-spacing: -0.03px;">A74/UP/14-15/01995-1</div><div class="r" style="top: 64px; letter-spacing: -0.02px;">A73/MH/13-14/09278-1</div><div class="r" style="top: 79px; letter-spacing: -0.02px;">A78/MH/13-14/09463-1</div><div class="r" style="top: 94px; letter-spacing: -0.03px;">A73/UP/14-15/02031-1</div><div class="r" style="top: 109px; letter-spacing: -0.02px;">A78/MH/13-14/06658-1</div><div class="r" style="top: 124px; letter-spacing: -0.02px;">A70/MH/13-14/09395-1</div><div class="r" style="top: 139px;">A61/AP/13-14/00815-1</div><div class="r" style="top: 154px; letter-spacing: -0.02px;">A73/MH/13-14/09338-1</div><div class="r" style="top: 169px; letter-spacing: -0.02px;">A86/MH/13-14/09384-1</div><div class="r" style="top: 184px; letter-spacing: -0.02px;">A73/MH/13-14/09488-1</div><div class="r" style="top: 199px; letter-spacing: -0.02px;">A86/MH/13-14/07004-1</div><div class="r" style="top: 214px; letter-spacing: -0.02px;">A78/MH/13-14/07896-1</div><div class="r" style="top: 229px; letter-spacing: -0.02px;">A78/MH/13-14/07897-1</div><div class="sb" style="right:0;top:19px;bottom:0"><div class="sbtn" style="top:1px"><svg class="a" style="left:50%;top:1px;margin-left:-3.500px" width="7" height="6" viewBox="0 0 7 6"><path d="M.7 4.500L3.500 1.700l2.800 2.800" stroke="#701020" stroke-width="1" fill="none"></path></svg></div><div class="sth" style="top:13px"></div></div></div><div class="tbx" style="left:476px;top:97px;width:659px;height:288px"><div class="cap"><span class="a" style="left:8px;top:2px;font-size:12px;line-height:14px;color:#2a2a2a;font-weight:bold">1</span><svg class="a" style="left:599px;top:3px" width="10" height="10" viewBox="0 0 10 10"><rect x="1.500" y=".5" width="7" height="6" fill="#f4f4f4" stroke="#484848"></rect><path d="M3 2.500h4M3 4.500h2.500" stroke="#484848" stroke-width=".9"></path><rect x=".5" y="6.500" width="9" height="3" fill="#e8e8e8" stroke="#484848"></rect></svg><span class="a" style="left:613.500px;top:1px;font-size:12.500px;line-height:14px;color:#686868;letter-spacing:-0.5px;transform:scaleX(.68);transform-origin:0 0">XL</span><i class="a" style="left:628px;top:10px;width:8px;height:2.500px;background:#484848"></i><i class="a" style="left:644px;top:3px;width:10px;height:10px;border:1px solid #484848;border-top-width:3px"></i></div><div class="c h" style="left: 0px; top: 19px; width: 96px; letter-spacing: -0.47px;">NAME</div><div class="c h" style="left: 96px; top: 19px; width: 165px; letter-spacing: -0.2px;">NEW_PHA_PO_NUMBER</div><div class="c h" style="left: 261px; top: 19px; width: 96px; letter-spacing: 0.03px;">ITEM_DESCR...</div><div class="c h" style="left: 357px; top: 19px; width: 96px; letter-spacing: -0.08px;">NEW_RECEIP...</div><div class="c h" style="left: 453px; top: 19px; width: 96px; letter-spacing: -0.02px;">NEW_PRHA_...</div><div class="c h" style="left: 549px; top: 19px; width: 97px; letter-spacing: 0.38px;">1</div><svg class="a" style="left:251px;top:25px" width="8" height="7" viewBox="0 0 8 7"><path d="M.5 .5l6 6h-6" stroke="#b0b0b0" fill="none"></path></svg><div class="c tt" style="left:0;top:34px;width:549px"></div><div class="c tt" style="left:549px;top:34px;width:97px;text-align:right;padding-right:4px;font-weight:bold">1</div><div class="c" style="left: 0px; top: 49px; width: 96px; letter-spacing: -0.56px;">ASL-Mumbai</div><div class="c" style="left: 96px; top: 49px; width: 165px; letter-spacing: -0.02px;">A78/MH/13-14/01016-1</div><div class="c" style="left: 261px; top: 49px; width: 96px; letter-spacing: -0.38px;">COMMISSION - ...</div><div class="c" style="left: 357px; top: 49px; width: 96px; letter-spacing: 0.33px;">-</div><div class="c" style="left: 453px; top: 49px; width: 96px; letter-spacing: 0.33px;">-</div><div class="c" style="left: 549px; top: 49px; width: 97px; text-align: right; padding-right: 4px; letter-spacing: -0.13px;">1</div><div class="c" style="left: 0px; top: 64px; width: 96px; letter-spacing: -0.56px;">ASL-Mumbai</div><div class="c" style="left: 96px; top: 64px; width: 165px; letter-spacing: -0.02px;">A71/MH/12-13/07352-1</div><div class="c" style="left: 261px; top: 64px; width: 96px; letter-spacing: -0.38px;">COMMISSION - ...</div><div class="c" style="left: 357px; top: 64px; width: 96px; letter-spacing: 0.33px;">-</div><div class="c" style="left: 453px; top: 64px; width: 96px; letter-spacing: 0.33px;">-</div><div class="c" style="left: 549px; top: 64px; width: 97px; text-align: right; padding-right: 4px; letter-spacing: -0.13px;">1</div><div class="c" style="left: 0px; top: 79px; width: 96px; letter-spacing: -0.56px;">ASL-Mumbai</div><div class="c" style="left: 96px; top: 79px; width: 165px; letter-spacing: -0.02px;">A73/MH/12-13/06944-1</div><div class="c" style="left: 261px; top: 79px; width: 96px; letter-spacing: -0.38px;">COMMISSION - ...</div><div class="c" style="left: 357px; top: 79px; width: 96px; letter-spacing: 0.33px;">-</div><div class="c" style="left: 453px; top: 79px; width: 96px; letter-spacing: 0.33px;">-</div><div class="c" style="left: 549px; top: 79px; width: 97px; text-align: right; padding-right: 4px; letter-spacing: -0.13px;">1</div><div class="c" style="left: 0px; top: 94px; width: 96px; letter-spacing: -0.56px;">ASL-Mumbai</div><div class="c" style="left: 96px; top: 94px; width: 165px; letter-spacing: -0.02px;">A73/MH/12-13/06945-1</div><div class="c" style="left: 261px; top: 94px; width: 96px; letter-spacing: -0.38px;">COMMISSION - ...</div><div class="c" style="left: 357px; top: 94px; width: 96px; letter-spacing: 0.33px;">-</div><div class="c" style="left: 453px; top: 94px; width: 96px; letter-spacing: 0.33px;">-</div><div class="c" style="left: 549px; top: 94px; width: 97px; text-align: right; padding-right: 4px; letter-spacing: -0.13px;">1</div><div class="c" style="left: 0px; top: 109px; width: 96px; letter-spacing: -0.56px;">ASL-Mumbai</div><div class="c" style="left: 96px; top: 109px; width: 165px; letter-spacing: -0.02px;">A71/MH/12-13/07199-1</div><div class="c" style="left: 261px; top: 109px; width: 96px; letter-spacing: -0.38px;">COMMISSION - ...</div><div class="c" style="left: 357px; top: 109px; width: 96px; letter-spacing: 0.33px;">-</div><div class="c" style="left: 453px; top: 109px; width: 96px; letter-spacing: 0.33px;">-</div><div class="c" style="left: 549px; top: 109px; width: 97px; text-align: right; padding-right: 4px; letter-spacing: -0.13px;">1</div><div class="c" style="left: 0px; top: 124px; width: 96px; letter-spacing: -0.56px;">ASL-Mumbai</div><div class="c" style="left: 96px; top: 124px; width: 165px; letter-spacing: -0.02px;">A71/MH/12-13/07195-1</div><div class="c" style="left: 261px; top: 124px; width: 96px; letter-spacing: -0.38px;">COMMISSION - ...</div><div class="c" style="left: 357px; top: 124px; width: 96px; letter-spacing: 0.33px;">-</div><div class="c" style="left: 453px; top: 124px; width: 96px; letter-spacing: 0.33px;">-</div><div class="c" style="left: 549px; top: 124px; width: 97px; text-align: right; padding-right: 4px; letter-spacing: -0.13px;">1</div><div class="c" style="left: 0px; top: 139px; width: 96px; letter-spacing: -0.56px;">ASL-Mumbai</div><div class="c" style="left: 96px; top: 139px; width: 165px; letter-spacing: -0.02px;">A74/MH/12-13/06925-1</div><div class="c" style="left: 261px; top: 139px; width: 96px; letter-spacing: -0.38px;">COMMISSION - ...</div><div class="c" style="left: 357px; top: 139px; width: 96px; letter-spacing: 0.33px;">-</div><div class="c" style="left: 453px; top: 139px; width: 96px; letter-spacing: 0.33px;">-</div><div class="c" style="left: 549px; top: 139px; width: 97px; text-align: right; padding-right: 4px; letter-spacing: -0.13px;">1</div><div class="c" style="left: 0px; top: 154px; width: 96px; letter-spacing: -0.56px;">ASL-Mumbai</div><div class="c" style="left: 96px; top: 154px; width: 165px; letter-spacing: 0.02px;">A70/MH/13-14/09116-1</div><div class="c" style="left: 261px; top: 154px; width: 96px; letter-spacing: -0.38px;">COMMISSION - ...</div><div class="c" style="left: 357px; top: 154px; width: 96px; letter-spacing: 0.33px;">-</div><div class="c" style="left: 453px; top: 154px; width: 96px; letter-spacing: 0.33px;">-</div><div class="c" style="left: 549px; top: 154px; width: 97px; text-align: right; padding-right: 4px; letter-spacing: -0.13px;">1</div><div class="c" style="left: 0px; top: 169px; width: 96px; letter-spacing: -0.56px;">ASL-Mumbai</div><div class="c" style="left: 96px; top: 169px; width: 165px; letter-spacing: -0.02px;">A61/MH/12-13/07203-1</div><div class="c" style="left: 261px; top: 169px; width: 96px; letter-spacing: -0.38px;">COMMISSION - ...</div><div class="c" style="left: 357px; top: 169px; width: 96px; letter-spacing: 0.33px;">-</div><div class="c" style="left: 453px; top: 169px; width: 96px; letter-spacing: 0.33px;">-</div><div class="c" style="left: 549px; top: 169px; width: 97px; text-align: right; padding-right: 4px; letter-spacing: -0.13px;">1</div><div class="c" style="left: 0px; top: 184px; width: 96px; letter-spacing: -0.56px;">ASL-Mumbai</div><div class="c" style="left: 96px; top: 184px; width: 165px; letter-spacing: -0.02px;">A77/MH/13-14/09261-1</div><div class="c" style="left: 261px; top: 184px; width: 96px; letter-spacing: -0.38px;">COMMISSION - ...</div><div class="c" style="left: 357px; top: 184px; width: 96px; letter-spacing: 0.33px;">-</div><div class="c" style="left: 453px; top: 184px; width: 96px; letter-spacing: 0.33px;">-</div><div class="c" style="left: 549px; top: 184px; width: 97px; text-align: right; padding-right: 4px; letter-spacing: -0.13px;">1</div><div class="c" style="left: 0px; top: 199px; width: 96px; letter-spacing: -0.56px;">ASL-Mumbai</div><div class="c" style="left: 96px; top: 199px; width: 165px; letter-spacing: -0.02px;">A77/MH/13-14/08778-1</div><div class="c" style="left: 261px; top: 199px; width: 96px; letter-spacing: -0.38px;">COMMISSION - ...</div><div class="c" style="left: 357px; top: 199px; width: 96px; letter-spacing: 0.33px;">-</div><div class="c" style="left: 453px; top: 199px; width: 96px; letter-spacing: 0.33px;">-</div><div class="c" style="left: 549px; top: 199px; width: 97px; text-align: right; padding-right: 4px; letter-spacing: -0.13px;">1</div><div class="c" style="left: 0px; top: 214px; width: 96px; letter-spacing: -0.56px;">ASL-Mumbai</div><div class="c" style="left: 96px; top: 214px; width: 165px; letter-spacing: -0.02px;">A71/MH/12-13/07200-1</div><div class="c" style="left: 261px; top: 214px; width: 96px; letter-spacing: -0.38px;">COMMISSION - ...</div><div class="c" style="left: 357px; top: 214px; width: 96px; letter-spacing: 0.33px;">-</div><div class="c" style="left: 453px; top: 214px; width: 96px; letter-spacing: 0.33px;">-</div><div class="c" style="left: 549px; top: 214px; width: 97px; text-align: right; padding-right: 4px; letter-spacing: -0.13px;">1</div><div class="c" style="left: 0px; top: 229px; width: 96px; letter-spacing: -0.56px;">ASL-Mumbai</div><div class="c" style="left: 96px; top: 229px; width: 165px; letter-spacing: -0.03px;">A73/UP/14-15/00063-1</div><div class="c" style="left: 261px; top: 229px; width: 96px; letter-spacing: -0.38px;">COMMISSION - ...</div><div class="c" style="left: 357px; top: 229px; width: 96px; letter-spacing: 0.33px;">-</div><div class="c" style="left: 453px; top: 229px; width: 96px; letter-spacing: 0.33px;">-</div><div class="c" style="left: 549px; top: 229px; width: 97px; text-align: right; padding-right: 4px; letter-spacing: -0.13px;">1</div><div class="c" style="left: 0px; top: 244px; width: 96px; letter-spacing: -0.56px;">ASL-Mumbai</div><div class="c" style="left: 96px; top: 244px; width: 165px;">A73/AP/14-15/00053-1</div><div class="c" style="left: 261px; top: 244px; width: 96px; letter-spacing: -0.38px;">COMMISSION - ...</div><div class="c" style="left: 357px; top: 244px; width: 96px; letter-spacing: 0.33px;">-</div><div class="c" style="left: 453px; top: 244px; width: 96px; letter-spacing: 0.33px;">-</div><div class="c" style="left: 549px; top: 244px; width: 97px; text-align: right; padding-right: 4px; letter-spacing: -0.13px;">1</div><div class="c" style="left: 0px; top: 259px; width: 96px; letter-spacing: -0.56px;">ASL-Mumbai</div><div class="c" style="left: 96px; top: 259px; width: 165px; letter-spacing: -0.02px;">A61/MH/14-15/00468-1</div><div class="c" style="left: 261px; top: 259px; width: 96px; letter-spacing: -0.38px;">COMMISSION - ...</div><div class="c" style="left: 357px; top: 259px; width: 96px; letter-spacing: 0.33px;">-</div><div class="c" style="left: 453px; top: 259px; width: 96px; letter-spacing: 0.33px;">-</div><div class="c" style="left: 549px; top: 259px; width: 97px; text-align: right; padding-right: 4px; letter-spacing: -0.13px;">1</div><div class="c" style="left: 0px; top: 274px; width: 96px; letter-spacing: -0.56px;">ASL-Mumbai</div><div class="c" style="left: 96px; top: 274px; width: 165px;">A61/AP/14-15/00040-1</div><div class="c" style="left: 261px; top: 274px; width: 96px; letter-spacing: -0.38px;">COMMISSION - ...</div><div class="c" style="left: 357px; top: 274px; width: 96px; letter-spacing: 0.33px;">-</div><div class="c" style="left: 453px; top: 274px; width: 96px; letter-spacing: 0.33px;">-</div><div class="c" style="left: 549px; top: 274px; width: 97px; text-align: right; padding-right: 4px; letter-spacing: -0.13px;">1</div><div class="a" style="left:645px;top:20px;width:13px;height:29px;background:#c6c3c6"></div><div class="sb" style="left:645px;top:49px;bottom:0"><div class="sbtn" style="top:1.500px"><svg class="a" style="left:50%;top:1px;margin-left:-3.500px" width="7" height="6" viewBox="0 0 7 6"><path d="M.7 4.500L3.500 1.700l2.800 2.800" stroke="#701020" stroke-width="1" fill="none"></path></svg></div><div class="sth" style="top:17px"></div><div class="sbtn" style="bottom:2px"><svg class="a" style="left:50%;top:1px;margin-left:-3.500px" width="7" height="6" viewBox="0 0 7 6"><path d="M.7 1.500L3.500 4.300l2.800-2.800" stroke="#701020" stroke-width="1" fill="none"></path></svg></div></div></div></div>
<div class="a" style="left:1359px;top:124px;width:5px;height:581px;background:#eceae7"></div>
<div class="a" style="left:1359px;top:124px;width:6px;height:15px;background:#d6d3ce;border-left:1px solid #fff;border-top:1px solid #fff;border-bottom:1px solid #424142"><i class="a" style="left:3px;top:7px;width:3px;height:1px;background:#000"></i></div>
<div class="a" style="left:1359px;top:140px;width:6px;height:499px;background:#d6d3ce;border-left:1px solid #fff;border-top:1px solid #fff;border-bottom:1px solid #424142"></div>
<div class="a" style="left:1359px;top:690px;width:6px;height:15px;background:#d6d3ce;border-left:1px solid #fff;border-top:1px solid #fff;border-bottom:1px solid #424142"><i class="a" style="left:3px;top:6px;width:3px;height:1px;background:#000"></i></div>
<div id="status" class="a"><div class="t" style="left: 2.5px; top: 6px; letter-spacing: -0.23px;">For Help, press F1</div>
<div class="pane" style="left:1125px;width:117px"></div><div class="t" style="left: 1128px; top: 6px; letter-spacing: 0.13px;">09-03-2015 15:46:06*</div>
<div class="pane" style="left:1244px;width:9px"></div>
<div class="pane" style="left:1254px;width:68px"></div><div class="t" style="left: 1257.5px; top: 6px; letter-spacing: -0.22px;">1739648 X 6</div>
<div class="pane" style="left:1324px;width:9px"></div><div class="pane" style="left:1334px;width:20px"></div></div>
<div id="task" class="a"><div class="tb" style="left:2px;width:53px;border-color:#fff #424142 #424142 #fff"><svg class="a" style="left:2px;top:7px" width="18" height="17" viewBox="0 0 17 16"><path d="M2 3c2-1.500 4-1.500 6 0L7 8C5 6.500 3 6.500 1 8z" fill="#e85828"></path><path d="M9 3.500c2 1.500 4 1.500 6.500 0l-1 5c-2 1.500-4.500 1.500-6.500 0z" fill="#58b030"></path><path d="M.8 9c2-1.500 4-1.500 6 0l-1 5c-2-1.500-4-1.500-6 0z" fill="#3888e0"></path><path d="M8 10c2 1.500 4 1.500 6.500 0l-1 4.500c-2 1.500-4.500 1.500-6.500 0z" fill="#f8c020"></path></svg><span class="a g" style="left: 18px; top: 10px; font-weight: bold; font-size: 12px; line-height: 14px; letter-spacing: 0.43px;">Start</span></div><div class="a" style="left:60px;top:6px;width:3px;height:33px;border:1px solid;border-color:#fff #848284 #848284 #fff"></div><div class="tb" style="left:72px"><svg class="a" style="left:8px;top:2px" width="34" height="32" viewBox="0 0 34 32"><path d="M2 2l12-1.500 4 1.500V22H2z" fill="#aab4bc" stroke="#5c666e"></path><path d="M14 .5l4 1.500V22l-4-1z" fill="#6c767e"></path><path d="M3 4.500h10M3 7.500h10M3 10.500h10M3 13.500h10" stroke="#4c5660" stroke-width="1.600"></path><path d="M3 3h10M3 6h10M3 9h10M3 12h10" stroke="#e0e4e8" stroke-width=".8"></path><path d="M14 15c0-3.500 8-3.500 8 0" fill="none" stroke="#283038" stroke-width="1.800"></path><path d="M6 19c0-2.500 2-3.500 4-3.500h12c3 0 7 2 9 5v9.500H6z" fill="#7c8a96" stroke="#3c4852"></path><path d="M7 18.500c1-2 2-2.500 4-2.500h11c3 0 5 1 7 3.500z" fill="#b0bcc6"></path><path d="M6 22h25v2H6z" fill="#48545e"></path><rect x="10.500" y="21" width="3.500" height="5" rx="1" fill="#e0e4e8" stroke="#2c363e" stroke-width=".8"></rect><rect x="23.500" y="21" width="3.500" height="5" rx="1" fill="#e0e4e8" stroke="#2c363e" stroke-width=".8"></rect></svg></div><div class="a" style="left:122px;top:2px;width:48px;height:40px"><svg class="a" style="left:10px;top:7px" width="29" height="23" viewBox="0 0 30 24"><path d="M5 1.500h23.500c.8 0 1 .5.800 1.200L25 21.500c-.2.700-.6 1-1.400 1H1c-.8 0-1-.5-.800-1.200L4 2.500c.2-.7.500-1 1-1z" fill="#2878d0" stroke="#88b8e8"></path><path d="M4.500 2h24l-2 9c-8-3-16-3-23.500 0z" fill="#4898e0" opacity=".7"></path><path d="M8.500 6l8 5.500-9.500 6" stroke="#fff" stroke-width="2.400" fill="none"></path><path d="M15 18.500h7" stroke="#fff" stroke-width="2.200"></path></svg></div><div class="tb dn" style="left:172px"><svg class="a" style="left:6px;top:1px" width="34" height="36" viewBox="0 0 34 36"><ellipse cx="17" cy="32.500" rx="11" ry="2" fill="#e4e4e4"></ellipse><circle cx="17" cy="16.500" r="15.500" fill="#c4c4c4"></circle><circle cx="17" cy="16" r="14.500" fill="#e4e4e4"></circle><path d="M4 11a14 14 0 0 1 26 0c-8-4-18-4-26 0z" fill="#f6f6f6"></path><circle cx="17" cy="16.500" r="10.300" fill="#2f9a2f"></circle><path d="M8 13a9.500 9.500 0 0 1 18 0c-6-2.500-12-2.500-18 0z" fill="#4cb848" opacity=".7"></path><path d="M23 22.500l4.500 4" stroke="#2f9a2f" stroke-width="4.500" stroke-linecap="round"></path><circle cx="17" cy="16.500" r="6" fill="#dcdcdc"></circle><circle cx="17" cy="16.500" r="3.800" fill="#2c2c2c"></circle></svg></div><div class="tb" style="left:222px"><svg class="a" style="left:11px;top:2px" width="24" height="30" viewBox="0 0 26 32"><rect x="1" y="1" width="24" height="30" rx="2.500" fill="#78b0e8" stroke="#2868b0"></rect><rect x="2.500" y="2.500" width="21" height="27" rx="1.500" fill="#a8d0f4"></rect><rect x="4" y="4" width="18" height="8" fill="#f0f6fc" stroke="#4880c0"></rect><rect x="4.500" y="4.500" width="17" height="1.800" fill="#f8a030"></rect><text x="20" y="11" font-family="Liberation Mono,monospace" font-size="8" text-anchor="end" fill="#203040">0</text><g fill="#f4f8fc" stroke="#4880c0" stroke-width=".6"><rect x="4" y="14.500" width="3.500" height="3"></rect><rect x="9" y="14.500" width="3.500" height="3"></rect><rect x="14" y="14.500" width="3.500" height="3"></rect><rect x="19" y="14.500" width="3.500" height="3"></rect><rect x="4" y="19" width="3.500" height="3"></rect><rect x="9" y="19" width="3.500" height="3"></rect><rect x="14" y="19" width="3.500" height="3"></rect><rect x="19" y="19" width="3.500" height="3"></rect><rect x="4" y="23.500" width="3.500" height="3"></rect><rect x="9" y="23.500" width="3.500" height="3"></rect><rect x="14" y="23.500" width="3.500" height="3"></rect></g><rect x="19" y="21" width="3.500" height="6" fill="#f8a030" stroke="#c07010" stroke-width=".6"></rect></svg></div><div class="tb" style="left:272px"><svg class="a" style="left:7px;top:2px" width="33" height="29" viewBox="0 0 34 30"><rect x="1" y="6" width="7" height="18" fill="#989c9c" stroke="#585c5c"></rect><rect x="2.500" y="8" width="4" height="2" fill="#d0d4d4"></rect><path d="M9 3l22-2 2 17-22 3z" fill="#606868" stroke="#404848"></path><path d="M11 5l18-1.500 1.700 13L12.500 18.500z" fill="#102818"></path><path d="M12 12l3 0 1.500-5 2 9 2-8 1.500 5 2-4 2 4 2-2 1.500 1" stroke="#38e048" stroke-width="1.300" fill="none"></path><path d="M17 21l8-1 2 5-12 1.500z" fill="#a0a4a4" stroke="#686c6c"></path><ellipse cx="21" cy="28" rx="9" ry="1.500" fill="#b8b8b4"></ellipse></svg></div><div class="tb" style="left:322px"><svg class="a" style="left:6px;top:3px" width="34" height="30" viewBox="0 0 36 32"><path d="M2 5c0-1.500 1-2.500 2.500-2.500H13l3 3h15.500c1.500 0 2.500 1 2.500 2.500V28H2z" fill="#ecd070" stroke="#c0a040"></path><rect x="5" y="6" width="26" height="10" fill="#fff" stroke="#c8c8c8" stroke-width=".6"></rect><rect x="7" y="7.500" width="4" height="2" fill="#38a838"></rect><rect x="21" y="7.500" width="5" height="2" fill="#d84838"></rect><path d="M1 11.500h34L33.500 29c-.1 1-1 1.500-2 1.500h-27c-1 0-1.900-.5-2-1.500z" fill="#fbeaa0" stroke="#c8a848"></path><path d="M9 30.500V21c0-1.500 1-2.500 2.500-2.500h13c1.500 0 2.500 1 2.500 2.500v9.500h-4V24c0-.8-.5-1.500-1.500-1.500h-7c-1 0-1.500.7-1.500 1.500v6.500z" fill="#78b8ec" stroke="#3878b8"></path></svg></div><div class="tb" style="left:372px"><svg class="a" style="left:6px;top:1px" width="34" height="34" viewBox="0 0 34 34"><path d="M3 22c-2-7 4-13 13-13 7 0 11 4 10 9-1 4-5 3-6 6s2 5-2 7c-5 2-13-2-15-9z" fill="#b4d4f0" stroke="#6c94c0"></path><circle cx="9" cy="18" r="2.300" fill="#e04838"></circle><circle cx="15" cy="14" r="2.300" fill="#f0c030"></circle><circle cx="9" cy="24.500" r="2.300" fill="#3878d8"></circle><circle cx="14" cy="28" r="2.300" fill="#38a848"></circle><path d="M30 1c1.500-.5 3 1 2 2.500L22 21l-3.500 1.500L19 18.500z" fill="#e88820" stroke="#a05808"></path><path d="M19 18.500l3 2.500-4 6c-1 1-2.500 0-2-1.500z" fill="#c8ccd4" stroke="#707888"></path></svg></div><div class="a" style="left:1146px;top:4px;width:3px;height:35px;border:1px solid;border-color:#fff #848284 #848284 #fff"></div><span class="t" style="left: 1156px; top: 13px; letter-spacing: 0.11px;">EN</span><div class="a" style="left:1176px;top:7px;width:2px;height:28px;border-left:1px solid #848284;border-right:1px solid #fff"></div><div class="tray"><svg class="a" style="left:5px;top:13px" width="7" height="9" viewBox="0 0 9 10"><path d="M1 4.500L4.500 1 8 4.500M1 9L4.500 5.500 8 9" stroke="#000" stroke-width="1.600" fill="none"></path></svg><svg class="a" style="left:21px;top:10px" width="18" height="18" viewBox="0 0 18 18"><path d="M2.500 1v16" stroke="#707070" stroke-width="1.600"></path><path d="M4 2c3-1.500 5 1.500 12 .5-1.500 2.500-1.500 4.500-3 6.500-4 1-6-1.500-9 .5z" fill="#f8f8f8" stroke="#888" stroke-width=".9"></path></svg><svg class="a" style="left:45px;top:10px" width="18" height="18" viewBox="0 0 18 18"><rect x="5" y="3" width="11" height="10" fill="#c8c8c8" stroke="#707070"></rect><rect x="7" y="5" width="7" height="6" fill="#e8e8e8"></rect><path d="M6 16h9" stroke="#707070" stroke-width="1.500"></path><path d="M3 1v5M1.500 1v3h3V1M3 6v11" stroke="#505050" stroke-width="1.100" fill="none"></path></svg><svg class="a" style="left:70px;top:9px" width="20" height="18" viewBox="0 0 20 18"><path d="M1 6h3l5-4.500v15L4 12H1z" fill="#e8e8e8" stroke="#909090"></path><circle cx="12.500" cy="12" r="4.500" fill="#e02020" stroke="#fff" stroke-width=".8"></circle><path d="M10.500 10l4 4M14.500 10l-4 4" stroke="#fff" stroke-width="1.500"></path></svg><span class="t" style="left: 114px; top: 4px; letter-spacing: 0.09px;">15:47</span><span class="t" style="left: 100px; top: 20px; letter-spacing: -0.03px;">09-03-2015</span><div class="a" style="left:164px;top:13px;width:8px;height:12px;background:linear-gradient(180deg,#3878d8,#1c50b0);border:1px solid #103880"></div></div></div>

</body></html>
